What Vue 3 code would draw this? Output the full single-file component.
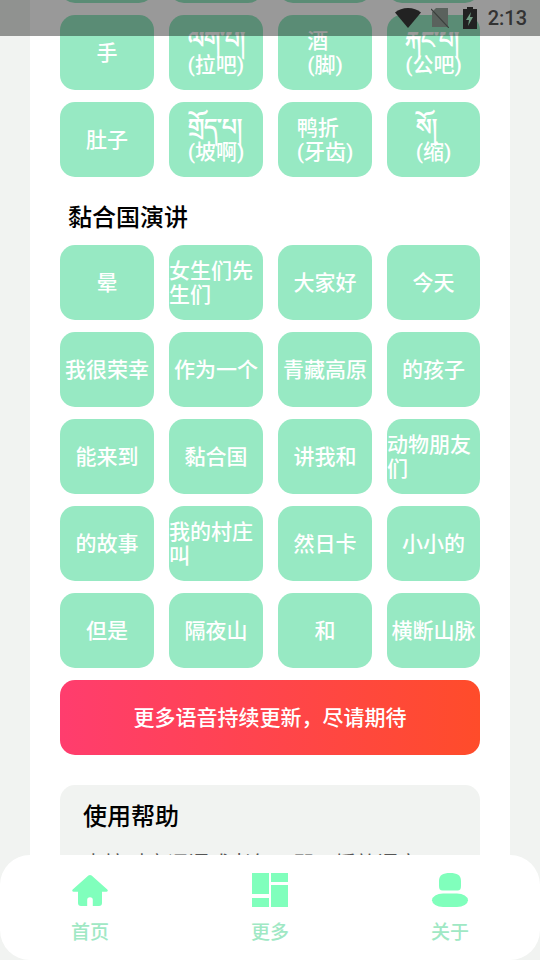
<script setup>
const top = ['', '', '', '']
const rowsA = [
  { t: '手' }, { tib: 'ལག་པ།', t: '(拉吧)' }, { t: '酒\n(脚)' }, { tib: 'རྐང་པ།', t: '(公吧)' },
  { t: '肚子' }, { tib: 'གྲོད་པ།', t: '(坡啊)' }, { t: '鸭折\n(牙齿)' }, { tib: 'སོ།', t: '(缩)' }
]
const rowsB = [
  '晕', '女生们先生们', '大家好', '今天',
  '我很荣幸', '作为一个', '青藏高原', '的孩子',
  '能来到', '黏合国', '讲我和', '动物朋友们',
  '的故事', '我的村庄叫', '然日卡', '小小的',
  '但是', '隔夜山', '和', '横断山脉'
]
</script>

<template>
  <div class="screen">
    <main class="page">
      <div class="card">
        <div class="grid">
          <div v-for="(c, i) in top" :key="'t' + i" class="cell"></div>
          <div v-for="(c, i) in rowsA" :key="i" class="cell">
            <div class="cell-text"><span v-if="c.tib" class="tib">{{ c.tib }}</span><br v-if="c.tib">{{ c.t }}</div>
          </div>
        </div>
        <h2 class="title">黏合国演讲</h2>
        <div class="grid">
          <div v-for="(t, i) in rowsB" :key="i" class="cell">
            <div class="cell-text">{{ t }}</div>
          </div>
        </div>
        <div class="banner">更多语音持续更新，尽请期待</div>
        <section class="help">
          <h2 class="help-title">使用帮助</h2>
          <p class="help-text">点按对应词语或者句子即可播放语音，再次点击</p>
        </section>
      </div>
    </main>

    <div class="status">
      <svg class="i-wifi" viewBox="0 0 26 20"><path d="M0 4.500C3.500 1.600 8 0 13 0s9.500 1.600 13 4.500L13 20z" fill="#222"/></svg>
      <svg class="i-sim" viewBox="0 0 18 20"><path d="M5 0h12v19H1V4z" fill="#5a625d"/><path d="M0 1l18 19" stroke="#3a3f3c" stroke-width="1.200"/></svg>
      <svg class="i-batt" viewBox="0 0 14 22"><path d="M4 0h6v2h4v20H0V2h4z" fill="#222"/><path d="M8 5L3 13h3l-1 6 5-9H7z" fill="#6f9c83"/></svg>
      <span class="time">2:13</span>
    </div>

    <nav class="tabs">
      <div class="tab">
        <svg class="icon" viewBox="0 0 38 34"><path d="M19 2a2.500 2.500 0 0 1 1.600.6L36.300 16.500a1.300 1.300 0 0 1-.9 2.300H31V30a3 3 0 0 1-3 3h-6.200v-6a2.800 2.800 0 0 0-5.600 0v6H10a3 3 0 0 1-3-3V18.800H2.600a1.300 1.300 0 0 1-.9-2.300L17.400 2.600A2.500 2.500 0 0 1 19 2z" fill="#80ffbc"/></svg>
        <span class="tab-label">首页</span>
      </div>
      <div class="tab">
        <svg class="icon" viewBox="0 0 38 34"><g fill="#80ffbc"><rect x="1" y="0" width="17" height="21"/><rect x="1" y="25" width="17" height="9"/><rect x="20" y="0" width="17" height="9"/><rect x="20" y="12" width="17" height="22"/></g></svg>
        <span class="tab-label">更多</span>
      </div>
      <div class="tab">
        <svg class="icon" viewBox="0 0 38 34"><g fill="#80ffbc"><path d="M8 8c0-6 4-8 11-8s11 2 11 8v5c0 3-1 4.500-3.500 4.500h-15C9 17.500 8 16 8 13z"/><rect x="1" y="20.500" width="36" height="13.500" rx="11" ry="6.700"/></g></svg>
        <span class="tab-label">关于</span>
      </div>
    </nav>
  </div>
</template>

<style>
html, body { margin: 0; background: #f1f3f1; }
</style>

<style scoped>
.screen {
  position: relative;
  width: 540px;
  height: 960px;
  overflow: hidden;
  background: #f1f3f1;
  font-family: Roboto, "Noto Sans", "Noto Sans CJK SC", sans-serif;
}
.page {
  margin: -72px 30px 0;
  background: #fff;
}
.card {
  padding: 0 30px;
  display: flex;
  flex-direction: column;
}
.grid {
  display: grid;
  grid-template-columns: 94px 94px 94px 93px;
  column-gap: 15px;
  grid-auto-rows: 75px;
  row-gap: 12px;
}
.cell {
  display: flex;
  align-items: center;
  justify-content: center;
  box-sizing: border-box;
  padding-top: 1px;
  border-radius: 15px;
  background: #97e9c3;
  color: #fff;
  font-size: 21px;
  font-weight: 500;
  line-height: 24px;
  text-align: left;
}
.cell-text {
  white-space: pre-line;
  word-break: break-all;
}
.tib {
  font-size: 23px;
  font-weight: 700;
}
.title {
  margin: 0 0 0 8px;
  height: 68px;
  line-height: 82px;
  font-size: 24px;
  font-weight: 500;
  color: #000;
}
.banner {
  margin-top: 12px;
  height: 75px;
  line-height: 77px;
  border-radius: 15px;
  text-align: center;
  color: #fff;
  font-size: 21px;
  font-weight: 500;
  background: linear-gradient(90deg, #ff3d6e, #ff4c2a);
}
.help {
  margin-top: 30px;
  padding: 15px 23px;
  height: 300px;
  border-radius: 15px;
  background: #f1f3f1;
}
.help-title {
  margin: 0;
  font-size: 24px;
  font-weight: 500;
  line-height: 34px;
  color: #000;
}
.help-text {
  margin: 15px 0 0;
  font-size: 21px;
  line-height: 30px;
  color: #555;
}
.status {
  position: absolute;
  left: 0;
  top: 0;
  width: 100%;
  height: 36px;
  box-sizing: border-box;
  padding-right: 13px;
  display: flex;
  align-items: center;
  justify-content: flex-end;
  background: rgba(0, 0, 0, 0.4);
}
.i-wifi { width: 26px; height: 20px; margin-right: 10px; }
.i-sim { width: 18px; height: 20px; margin-right: 14px; }
.i-batt { width: 14px; height: 22px; margin-right: 11px; }
.time {
  font-size: 20px;
  font-weight: 500;
  color: #333;
}
.tabs {
  position: absolute;
  left: 0;
  right: 0;
  bottom: 0;
  height: 105px;
  box-sizing: border-box;
  border-radius: 30px;
  background: #fff;
  padding: 18px 0 0;
  display: flex;
  justify-content: space-between;
}
.tab {
  width: 180px;
  display: flex;
  flex-direction: column;
  align-items: center;
}
.icon { width: 38px; height: 34px; }
.tab-label {
  margin-top: 11px;
  font-size: 19px;
  font-weight: 500;
  line-height: 30px;
  color: #a0e8c4;
}
</style>
